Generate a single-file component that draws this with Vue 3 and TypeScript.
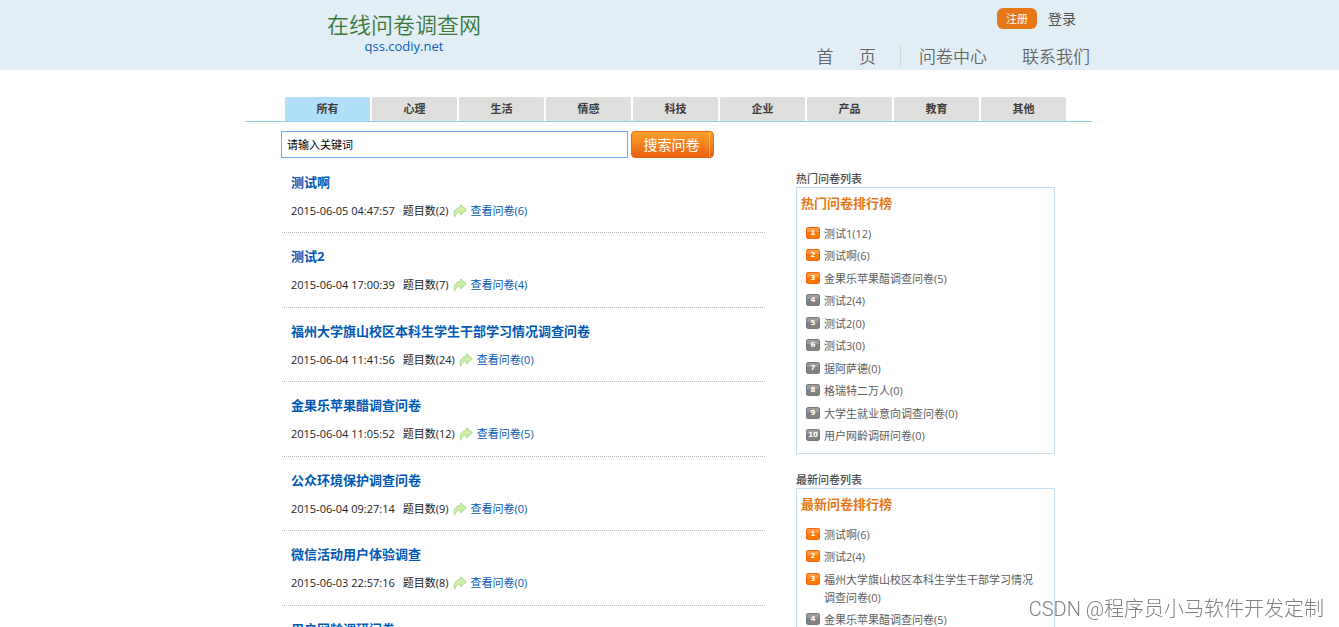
<script setup lang="ts">
import { ref } from 'vue'

interface Survey {
  title: string
  time: string
  questions: number
  views: number
}

interface RankItem {
  title: string
  count: number
}

interface RankPanel {
  label: string
  heading: string
  items: RankItem[]
}

const categories: string[] = ['所有', '心理', '生活', '情感', '科技', '企业', '产品', '教育', '其他']
const active = ref<string>('所有')
const keyword = ref<string>('请输入关键词')

const surveys: Survey[] = [
  { title: '测试啊', time: '2015-06-05 04:47:57', questions: 2, views: 6 },
  { title: '测试2', time: '2015-06-04 17:00:39', questions: 7, views: 4 },
  { title: '福州大学旗山校区本科生学生干部学习情况调查问卷', time: '2015-06-04 11:41:56', questions: 24, views: 0 },
  { title: '金果乐苹果醋调查问卷', time: '2015-06-04 11:05:52', questions: 12, views: 5 },
  { title: '公众环境保护调查问卷', time: '2015-06-04 09:27:14', questions: 9, views: 0 },
  { title: '微信活动用户体验调查', time: '2015-06-03 22:57:16', questions: 8, views: 0 },
]
const nextTitle = '用户网龄调研问卷'

const panels: RankPanel[] = [
  {
    label: '热门问卷列表',
    heading: '热门问卷排行榜',
    items: [
      { title: '测试1', count: 12 },
      { title: '测试啊', count: 6 },
      { title: '金果乐苹果醋调查问卷', count: 5 },
      { title: '测试2', count: 4 },
      { title: '测试2', count: 0 },
      { title: '测试3', count: 0 },
      { title: '据阿萨德', count: 0 },
      { title: '格瑞特二万人', count: 0 },
      { title: '大学生就业意向调查问卷', count: 0 },
      { title: '用户网龄调研问卷', count: 0 },
    ],
  },
  {
    label: '最新问卷列表',
    heading: '最新问卷排行榜',
    items: [
      { title: '测试啊', count: 6 },
      { title: '测试2', count: 4 },
      { title: '福州大学旗山校区本科生学生干部学习情况调查问卷', count: 0 },
      { title: '金果乐苹果醋调查问卷', count: 5 },
    ],
  },
]
</script>

<template>
  <div class="page">
    <header class="header">
      <div class="container header-inner">
        <a class="brand" href="#">
          <span class="brand-name">在线问卷调查网</span>
          <span class="brand-url">qss.codiy.net</span>
        </a>
        <div class="header-right">
          <div class="account">
            <a class="register" href="#">注册</a>
            <a class="login" href="#">登录</a>
          </div>
          <nav class="nav">
            <a class="nav-home" href="#">首&emsp;&ensp;页</a>
            <a class="nav-center" href="#">问卷中心</a>
            <a href="#">联系我们</a>
          </nav>
        </div>
      </div>
    </header>

    <main class="container">
      <nav class="tabs">
        <a
          v-for="c in categories"
          :key="c"
          class="tab"
          :class="{ active: c === active }"
          href="#"
          @click.prevent="active = c"
        >{{ c }}</a>
      </nav>

      <form class="search" @submit.prevent>
        <input v-model="keyword" class="search-input" type="text" aria-label="关键词" />
        <button class="search-button" type="submit">搜索问卷</button>
      </form>

      <div class="columns">
        <section class="surveys">
          <article v-for="s in surveys" :key="s.title" class="survey">
            <h2><a href="#">{{ s.title }}</a></h2>
            <p class="meta">
              <time>{{ s.time }}</time>
              <span>题目数({{ s.questions }})</span>
              <svg class="arrow" width="14" height="14" viewBox="0 0 14 14" aria-hidden="true">
                <path
                  d="M7.500 .8 13.400 5.800 7.500 11V8.200C4.800 8.200 3 9.500 1.700 13.200-.2 8.200 2.300 3.700 7.500 3.500Z"
                  fill="#cdf0a4"
                  stroke="#b3d698"
                  stroke-width="1"
                  stroke-linejoin="round"
                />
              </svg>
              <a href="#">查看问卷({{ s.views }})</a>
            </p>
          </article>
          <article class="survey">
            <h2><a href="#">{{ nextTitle }}</a></h2>
          </article>
        </section>

        <aside class="sidebar">
          <section v-for="p in panels" :key="p.label" class="panel">
            <h3 class="panel-label">{{ p.label }}</h3>
            <div class="panel-box">
              <h4>{{ p.heading }}</h4>
              <ol>
                <li v-for="(item, i) in p.items" :key="i">
                  <span class="rank" :class="{ top: i < 3 }">{{ i + 1 }}</span>
                  <a href="#">{{ item.title }}({{ item.count }})</a>
                </li>
              </ol>
            </div>
          </section>
        </aside>
      </div>
    </main>

    <div class="watermark">CSDN @程序员小马软件开发定制</div>
  </div>
</template>

<style>
body {
  margin: 0;
  background: #fff;
}
</style>

<style scoped>
.page {
  height: 100vh;
  overflow: hidden;
  font-family: 'Open Sans', 'Noto Sans CJK SC', sans-serif;
  font-size: 11px;
  line-height: 18px;
  color: #222;
}

a {
  color: inherit;
  text-decoration: none;
}

h2,
h3,
h4,
p,
ol {
  margin: 0;
  padding: 0;
}

.container {
  max-width: 849px;
  margin: 0 auto;
}

.header {
  background: #e2eef6;
}

.header-inner {
  display: flex;
  justify-content: space-between;
  box-sizing: border-box;
  height: 70px;
  padding: 0 4px 0 82px;
}

.brand {
  display: flex;
  flex-direction: column;
  align-items: center;
  padding-top: 11px;
}

.brand-name {
  font-size: 22px;
  font-weight: 350;
  line-height: 26px;
  color: #3a7838;
}

.brand-url {
  font-size: 13px;
  line-height: 18px;
  color: #0a5cb8;
}

.header-right {
  display: flex;
  flex-direction: column;
  gap: 17px;
  padding-top: 8px;
}

.account {
  display: flex;
  justify-content: flex-end;
  gap: 11px;
  padding-right: 14px;
  line-height: 21px;
}

.register {
  padding: 0 9px;
  border-radius: 6px;
  background: #e67817;
  color: #fff;
}

.login {
  font-size: 14px;
  color: #4c4c4c;
}

.nav {
  display: flex;
  font-size: 17px;
  font-weight: 350;
  line-height: 21px;
  color: #666;
}

.nav-home {
  padding-right: 24px;
  border-right: 1px solid #d5d5d5;
}

.nav-center {
  padding: 0 35px 0 18px;
}

.tabs {
  display: flex;
  gap: 2px;
  margin: 27px 2px 0 0;
  padding: 0 22px 0 40px;
  border-bottom: 1px solid #92cdee;
}

.tab {
  flex: 0 0 85px;
  border-radius: 2px 2px 0 0;
  background: #dededd;
  font-weight: 700;
  line-height: 24px;
  text-align: center;
  color: #3c3c3c;
}

.tab.active {
  background: #b1def8;
}

.search {
  display: flex;
  gap: 3px;
  margin-top: 9px;
  padding-left: 36px;
}

.search-input {
  box-sizing: border-box;
  width: 347px;
  height: 27px;
  padding: 0 5px 2px;
  border: 1px solid #6fa8ee;
  background: #fff;
  font: inherit;
  color: #000;
}

.search-button {
  width: 83px;
  height: 27px;
  padding: 0 2px 1px 0;
  border: 1px solid #e8690f;
  border-radius: 4px;
  background:
    linear-gradient(#ffc27a, #ffa35a) right 3px top 0 / 1px 100% no-repeat,
    linear-gradient(#fda02b, #f58220 50%, #ec5f0f);
  font-family: inherit;
  font-size: 14px;
  color: #fff;
}

.columns {
  display: grid;
  grid-template-columns: minmax(0, 1fr) 259px;
  gap: 31px;
  padding: 1px 39px 0 37px;
}

.survey {
  padding: 13px 9px 11px;
  border-bottom: 1px dotted #b5b5b5;
}

.survey:nth-child(even) {
  padding-bottom: 12px;
}

.survey h2 {
  font-size: 13px;
  line-height: 20px;
  color: #0058b5;
}

.meta {
  display: flex;
  align-items: center;
  gap: 3px;
  margin-top: 9px;
  line-height: 20px;
}

.meta time {
  margin-right: 5px;
}

.meta .arrow {
  margin: 0 1px;
}

.meta a {
  color: #0058b5;
}

.sidebar {
  display: flex;
  flex-direction: column;
  gap: 17px;
  padding-top: 11px;
  color: #5c5c5c;
}

.panel-label {
  font-size: 11px;
  font-weight: 500;
  line-height: 17px;
  color: #4c4c4c;
}

.panel-box {
  padding: 5px 14px 5px 4px;
  border: 1px solid #c8dcf0;
}

.panel-box h4 {
  font-size: 13px;
  line-height: 20px;
  color: #e67817;
}

.panel-box ol {
  margin: 10px 0 0 5px;
  list-style: none;
}

.panel-box li {
  display: flex;
  align-items: flex-start;
  gap: 4px;
  padding: 2px 0;
}

.panel-box li:nth-child(even) {
  padding-bottom: 3px;
}

.rank {
  flex: none;
  box-sizing: border-box;
  width: 14px;
  height: 12px;
  margin-top: 2px;
  border: 1px solid #7a7a7a;
  border-radius: 2px;
  background: linear-gradient(#9c9c9c 40%, #828282 40%);
  font-family: 'DejaVu Sans', sans-serif;
  font-size: 7px;
  font-weight: 700;
  line-height: 10px;
  text-align: center;
  color: #fff;
}

.rank.top {
  border-color: #f9650c;
  background: linear-gradient(#ff9840 40%, #ff7a05 40%);
}

.watermark {
  position: fixed;
  right: 15px;
  bottom: 4px;
  font-family: Roboto, 'Noto Sans CJK SC', sans-serif;
  font-size: 20px;
  font-weight: 300;
  line-height: 28px;
  color: #808080;
}
</style>
